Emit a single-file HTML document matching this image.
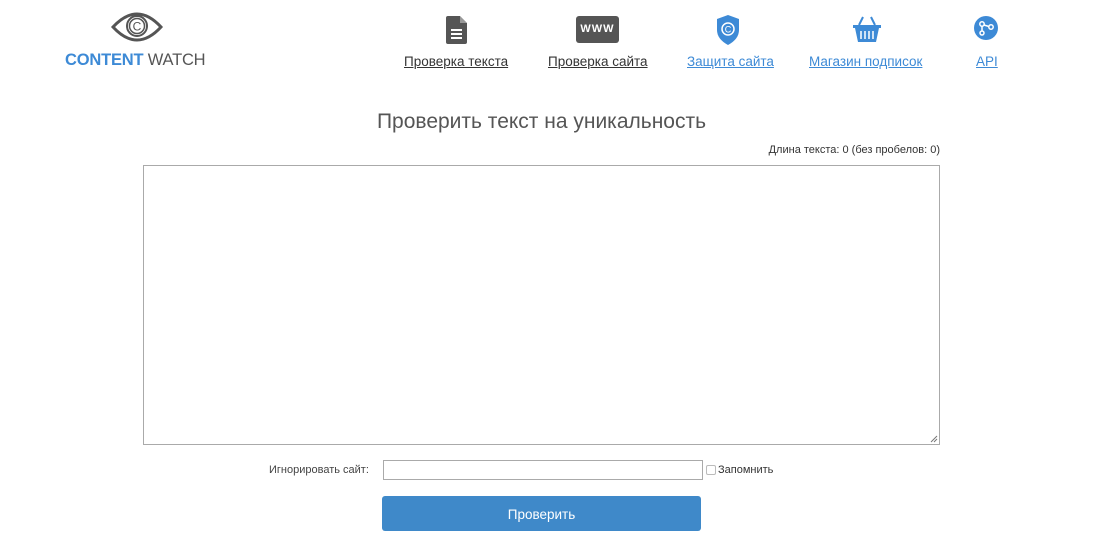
<!DOCTYPE html>
<html><head><meta charset="utf-8"><style>
body{margin:0;width:1113px;height:545px;background:#fff;font-family:"Liberation Sans",sans-serif;position:relative;overflow:hidden;color:#333}
.a{position:absolute}
.nav{font-size:13.5px;text-decoration:underline;white-space:nowrap}
</style></head><body>
<svg class="a" style="left:111px;top:10px" width="52" height="34" viewBox="0 0 52 34">
<path d="M2 17 Q26 -9 50 17 Q26 43 2 17Z" fill="none" stroke="#555" stroke-width="3"/>
<circle cx="26" cy="16" r="10" fill="none" stroke="#555" stroke-width="2"/>
<circle cx="26" cy="16" r="7.5" fill="none" stroke="#555" stroke-width="1.5"/>
<text x="26" y="20.5" font-size="12" text-anchor="middle" fill="#555" font-family="Liberation Sans">C</text></svg>
<div class="a" style="left:65px;top:51px;font-size:16.5px;letter-spacing:-0.2px"><span style="color:#3d8ad6;font-weight:bold">CONTENT</span> <span style="color:#555">WATCH</span></div>

<svg class="a" style="left:446px;top:16px" width="22" height="28"><path d="M0 2 Q0 0 2 0 H14 L21 7 V26 Q21 28 19 28 H2 Q0 28 0 26Z" fill="#555"/><path d="M14 0 V7 H21" fill="#fff" opacity=".4"/><rect x="5" y="13" width="11" height="2" fill="#fff"/><rect x="5" y="17" width="11" height="2" fill="#fff"/><rect x="5" y="21" width="11" height="2" fill="#fff"/></svg>
<div class="a" style="left:576px;top:16px;width:43px;height:27px;background:#555;border-radius:3px;color:#fff;font-size:11px;font-weight:bold;text-align:center;line-height:27px;letter-spacing:1px">WWW</div>
<svg class="a" style="left:716px;top:15px" width="24" height="30"><path d="M12 0 L23 4 V15 Q23 24 12 30 Q1 24 1 15 V4Z" fill="#3d8ad6"/><circle cx="12" cy="14" r="6" fill="none" stroke="#fff" stroke-width="1.5"/><text x="12" y="17.5" font-size="9" text-anchor="middle" fill="#fff">C</text></svg>
<svg class="a" style="left:852px;top:15px" width="30" height="28"><path d="M11 2 L7 10 M19 2 L23 10" stroke="#3d8ad6" stroke-width="2" fill="none"/><rect x="1" y="10" width="28" height="3" fill="#3d8ad6"/><path d="M3 13 H27 L24 27 H6Z" fill="#3d8ad6"/><path d="M9 16 V24 M13 16 V24 M17 16 V24 M21 16 V24" stroke="#fff" stroke-width="1.5"/></svg>
<svg class="a" style="left:974px;top:16px" width="24" height="24"><circle cx="12" cy="12" r="12" fill="#3d8ad6"/><g fill="none" stroke="#fff" stroke-width="1.5"><circle cx="8" cy="8" r="2.2"/><circle cx="8" cy="17" r="2"/><circle cx="17" cy="11" r="2.2"/><path d="M8 10 V15 M10 9 L15 10.5"/></g></svg>

<div class="a nav" style="left:404px;top:54px;color:#333">Проверка текста</div>
<div class="a nav" style="left:548px;top:54px;color:#333">Проверка сайта</div>
<div class="a nav" style="left:687px;top:54px;color:#3d8ad6">Защита сайта</div>
<div class="a nav" style="left:809px;top:54px;color:#3d8ad6">Магазин подписок</div>
<div class="a nav" style="left:976px;top:54px;color:#3d8ad6">API</div>

<div class="a" style="left:0;width:1083px;top:110px;text-align:center;font-size:21px;color:#555">Проверить текст на уникальность</div>
<div class="a" style="right:173px;top:144px;font-size:11px;color:#333">Длина текста: 0 (без пробелов: 0)</div>
<div class="a" style="left:143px;top:165px;width:795px;height:278px;border:1px solid #aaa"></div>
<svg class="a" style="left:930px;top:435px" width="8" height="8"><path d="M7 1 L1 7 M7 4 L4 7" stroke="#777"/></svg>

<div class="a" style="left:269px;top:464px;font-size:11px;color:#444">Игнорировать сайт:</div>
<div class="a" style="left:383px;top:460px;width:318px;height:18px;border:1px solid #aaa"></div>
<div class="a" style="left:706px;top:465px;width:8px;height:8px;border:1px solid #bbb;border-radius:2px"></div>
<div class="a" style="left:718px;top:464px;font-size:11px;color:#333">Запомнить</div>
<div class="a" style="left:382px;top:496px;width:319px;height:35px;background:#3f89c9;border-radius:3px;color:#fff;font-size:13.5px;text-align:center;line-height:37px">Проверить</div>
</body></html>
